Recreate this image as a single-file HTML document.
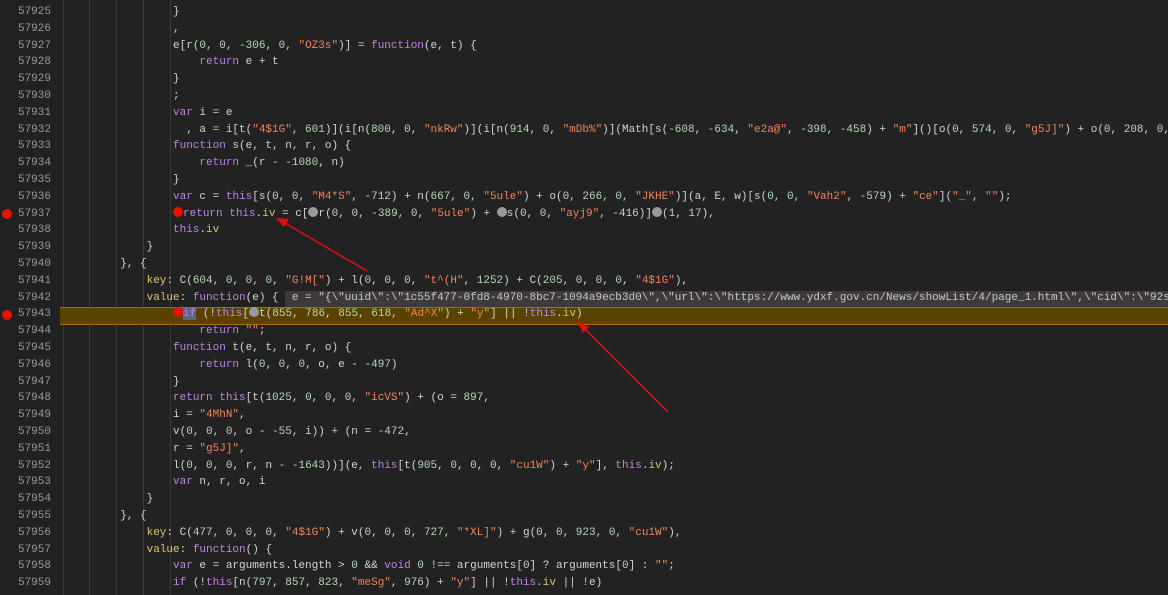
<!DOCTYPE html>
<html><head><meta charset="utf-8"><style>
body{margin:0;width:1168px;height:595px;background:#222222;overflow:hidden;position:relative;font-family:"Liberation Mono",monospace;font-size:11px;}
.g{position:absolute;left:0;top:0;width:60px;height:595px;background:#202123;}
.l{position:absolute;left:0;height:17px;line-height:17px;white-space:pre;width:1168px;}
.ln{position:absolute;left:0;width:51px;text-align:right;color:#9a9a9a;}
.c{position:absolute;left:107px;color:#d4d4d4;}
.k{color:#bd85e6}.s{color:#f0855a}.n{color:#b5d8b8}.p{color:#ddc46e}
.ig{position:absolute;top:0;height:595px;width:1px;background:#3a3a3a;}
.bp{position:absolute;left:2px;width:10px;height:10px;border-radius:50%;background:#e51400;}
.d{display:inline-block;width:10px;height:10px;border-radius:50%;vertical-align:-1px;}
.hl{position:absolute;left:60px;top:307px;width:1108px;height:16px;background:#5c4200;border-top:1px solid #a07000;border-bottom:1px solid #a07000;}
.tip{position:absolute;left:285px;top:291px;width:883px;height:16px;background:#3f3a3a;}
</style></head><body>
<div class="g"></div>
<div class="ig" style="left:63px"></div><div class="ig" style="left:89px"></div><div class="ig" style="left:116px"></div><div class="ig" style="left:143px"></div><div class="ig" style="left:170px"></div>
<div class="hl"></div><div class="tip"></div>
<div class="l" style="top:4px"><span class="ln">57925</span><span class="c">          }</span></div>
<div class="l" style="top:21px"><span class="ln">57926</span><span class="c">          ,</span></div>
<div class="l" style="top:38px"><span class="ln">57927</span><span class="c">          e[r(<span class="n">0</span>, <span class="n">0</span>, <span class="n">-306</span>, <span class="n">0</span>, <span class="s">"OZ3s"</span>)] = <span class="k">function</span>(e, t) {</span></div>
<div class="l" style="top:54px"><span class="ln">57928</span><span class="c">              <span class="k">return</span> e + t</span></div>
<div class="l" style="top:71px"><span class="ln">57929</span><span class="c">          }</span></div>
<div class="l" style="top:88px"><span class="ln">57930</span><span class="c">          ;</span></div>
<div class="l" style="top:105px"><span class="ln">57931</span><span class="c">          <span class="k">var</span> i = e</span></div>
<div class="l" style="top:122px"><span class="ln">57932</span><span class="c">            , a = i[t(<span class="s">"4$1G"</span>, <span class="n">601</span>)](i[n(<span class="n">800</span>, <span class="n">0</span>, <span class="s">"nkRw"</span>)](i[n(<span class="n">914</span>, <span class="n">0</span>, <span class="s">"mDb%"</span>)](Math[s(<span class="n">-608</span>, <span class="n">-634</span>, <span class="s">"e2a@"</span>, <span class="n">-398</span>, <span class="n">-458</span>) + <span class="s">"m"</span>]()[o(<span class="n">0</span>, <span class="n">574</span>, <span class="n">0</span>, <span class="s">"g5J]"</span>) + o(<span class="n">0</span>, <span class="n">208</span>, <span class="n">0</span>,</span></div>
<div class="l" style="top:138px"><span class="ln">57933</span><span class="c">          <span class="k">function</span> s(e, t, n, r, o) {</span></div>
<div class="l" style="top:155px"><span class="ln">57934</span><span class="c">              <span class="k">return</span> _(r - <span class="n">-1080</span>, n)</span></div>
<div class="l" style="top:172px"><span class="ln">57935</span><span class="c">          }</span></div>
<div class="l" style="top:189px"><span class="ln">57936</span><span class="c">          <span class="k">var</span> c = <span class="k">this</span>[s(<span class="n">0</span>, <span class="n">0</span>, <span class="s">"M4*S"</span>, <span class="n">-712</span>) + n(<span class="n">667</span>, <span class="n">0</span>, <span class="s">"5ule"</span>) + o(<span class="n">0</span>, <span class="n">266</span>, <span class="n">0</span>, <span class="s">"JKHE"</span>)](a, E, w)[s(<span class="n">0</span>, <span class="n">0</span>, <span class="s">"Vah2"</span>, <span class="n">-579</span>) + <span class="s">"ce"</span>](<span class="s">"_"</span>, <span class="s">""</span>);</span></div>
<div class="l" style="top:206px"><span class="ln">57937</span><span class="c">          <span class="d" style="background:#e51400"></span><span class="k">return</span> <span class="k">this</span>.<span class="p">iv</span> = c[<span class="d" style="background:#9a9a9a"></span>r(<span class="n">0</span>, <span class="n">0</span>, <span class="n">-389</span>, <span class="n">0</span>, <span class="s">"5ule"</span>) + <span class="d" style="background:#9a9a9a"></span>s(<span class="n">0</span>, <span class="n">0</span>, <span class="s">"ayj9"</span>, <span class="n">-416</span>)]<span class="d" style="background:#9a9a9a"></span>(<span class="n">1</span>, <span class="n">17</span>),</span></div>
<div class="l" style="top:222px"><span class="ln">57938</span><span class="c">          <span class="k">this</span>.<span class="p">iv</span></span></div>
<div class="l" style="top:239px"><span class="ln">57939</span><span class="c">      }</span></div>
<div class="l" style="top:256px"><span class="ln">57940</span><span class="c">  }, {</span></div>
<div class="l" style="top:273px"><span class="ln">57941</span><span class="c">      <span class="p">key</span>: C(<span class="n">604</span>, <span class="n">0</span>, <span class="n">0</span>, <span class="n">0</span>, <span class="s">"G!M["</span>) + l(<span class="n">0</span>, <span class="n">0</span>, <span class="n">0</span>, <span class="s">"t^(H"</span>, <span class="n">1252</span>) + C(<span class="n">205</span>, <span class="n">0</span>, <span class="n">0</span>, <span class="n">0</span>, <span class="s">"4$1G"</span>),</span></div>
<div class="l" style="top:290px"><span class="ln">57942</span><span class="c">      <span class="p">value</span>: <span class="k">function</span>(e) {  <span style="color:#c8c8c8">e = "{\"uuid\":\"1c55f477-0fd8-4970-8bc7-1094a9ecb3d0\",\"url\":\"https://www.ydxf.gov.cn/News/showList/4/page_1.html\",\"cid\":\"92s</span></span></div>
<div class="l" style="top:306px"><span class="ln">57943</span><span class="c">          <span class="d" style="background:#e51400"></span><span class="k" style="background:#5a6a80">if</span> (!<span class="k">this</span>[<span class="d" style="background:#9a9a9a"></span>t(<span class="n">855</span>, <span class="n">786</span>, <span class="n">855</span>, <span class="n">618</span>, <span class="s">"Ad^X"</span>) + <span class="s">"y"</span>] || !<span class="k">this</span>.<span class="p">iv</span>)</span></div>
<div class="l" style="top:323px"><span class="ln">57944</span><span class="c">              <span class="k">return</span> <span class="s">""</span>;</span></div>
<div class="l" style="top:340px"><span class="ln">57945</span><span class="c">          <span class="k">function</span> t(e, t, n, r, o) {</span></div>
<div class="l" style="top:357px"><span class="ln">57946</span><span class="c">              <span class="k">return</span> l(<span class="n">0</span>, <span class="n">0</span>, <span class="n">0</span>, o, e - <span class="n">-497</span>)</span></div>
<div class="l" style="top:374px"><span class="ln">57947</span><span class="c">          }</span></div>
<div class="l" style="top:390px"><span class="ln">57948</span><span class="c">          <span class="k">return</span> <span class="k">this</span>[t(<span class="n">1025</span>, <span class="n">0</span>, <span class="n">0</span>, <span class="n">0</span>, <span class="s">"icVS"</span>) + (o = <span class="n">897</span>,</span></div>
<div class="l" style="top:407px"><span class="ln">57949</span><span class="c">          i = <span class="s">"4MhN"</span>,</span></div>
<div class="l" style="top:424px"><span class="ln">57950</span><span class="c">          v(<span class="n">0</span>, <span class="n">0</span>, <span class="n">0</span>, o - <span class="n">-55</span>, i)) + (n = <span class="n">-472</span>,</span></div>
<div class="l" style="top:441px"><span class="ln">57951</span><span class="c">          r = <span class="s">"g5J]"</span>,</span></div>
<div class="l" style="top:458px"><span class="ln">57952</span><span class="c">          l(<span class="n">0</span>, <span class="n">0</span>, <span class="n">0</span>, r, n - <span class="n">-1643</span>))](e, <span class="k">this</span>[t(<span class="n">905</span>, <span class="n">0</span>, <span class="n">0</span>, <span class="n">0</span>, <span class="s">"cu1W"</span>) + <span class="s">"y"</span>], <span class="k">this</span>.<span class="p">iv</span>);</span></div>
<div class="l" style="top:474px"><span class="ln">57953</span><span class="c">          <span class="k">var</span> n, r, o, i</span></div>
<div class="l" style="top:491px"><span class="ln">57954</span><span class="c">      }</span></div>
<div class="l" style="top:508px"><span class="ln">57955</span><span class="c">  }, {</span></div>
<div class="l" style="top:525px"><span class="ln">57956</span><span class="c">      <span class="p">key</span>: C(<span class="n">477</span>, <span class="n">0</span>, <span class="n">0</span>, <span class="n">0</span>, <span class="s">"4$1G"</span>) + v(<span class="n">0</span>, <span class="n">0</span>, <span class="n">0</span>, <span class="n">727</span>, <span class="s">"*XL]"</span>) + g(<span class="n">0</span>, <span class="n">0</span>, <span class="n">923</span>, <span class="n">0</span>, <span class="s">"cu1W"</span>),</span></div>
<div class="l" style="top:542px"><span class="ln">57957</span><span class="c">      <span class="p">value</span>: <span class="k">function</span>() {</span></div>
<div class="l" style="top:558px"><span class="ln">57958</span><span class="c">          <span class="k">var</span> e = arguments.length &gt; <span class="n">0</span> &amp;&amp; <span class="k">void</span> <span class="n">0</span> !== arguments[<span class="n">0</span>] ? arguments[<span class="n">0</span>] : <span class="s">""</span>;</span></div>
<div class="l" style="top:575px"><span class="ln">57959</span><span class="c">          <span class="k">if</span> (!<span class="k">this</span>[n(<span class="n">797</span>, <span class="n">857</span>, <span class="n">823</span>, <span class="s">"meSg"</span>, <span class="n">976</span>) + <span class="s">"y"</span>] || !<span class="k">this</span>.<span class="p">iv</span> || !e)</span></div>
<div class="bp" style="top:209px"></div><div class="bp" style="top:310px"></div>
<svg style="position:absolute;left:0;top:0" width="1168" height="595">
<g stroke="#e01010" stroke-width="1.5" fill="none"><line x1="367" y1="271" x2="278" y2="219"/><line x1="668" y1="412" x2="579" y2="323"/></g>
<polygon points="276,218 289,219 284,227" fill="#e01010"/>
<polygon points="577,321 589,327 583,333" fill="#e01010"/>
</svg>
</body></html>
